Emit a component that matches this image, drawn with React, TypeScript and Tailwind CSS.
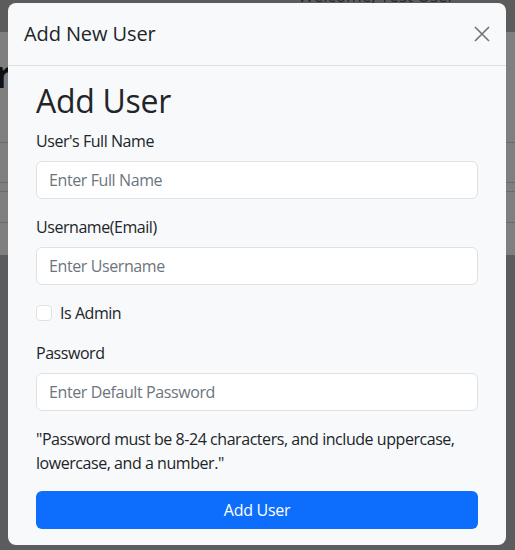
import { useState } from "react";

const font = { fontFamily: '"Segoe UI", "Open Sans", "Noto Sans", sans-serif' };

function Field({
  label,
  placeholder,
  type = "text",
}: {
  label: string;
  placeholder: string;
  type?: string;
}) {
  return (
    <div className="mb-4 flex flex-col">
      <label className="mb-2 text-[16px] leading-6 tracking-[-0.45px] text-[#212529]">{label}</label>
      <input
        type={type}
        placeholder={placeholder}
        className="h-[38px] w-full rounded-md border border-[#dee2e6] bg-white px-3 text-[16px] tracking-[-0.4px] text-[#212529] placeholder:text-[#6c757d] outline-none"
      />
    </div>
  );
}

export default function App() {
  const [isAdmin, setIsAdmin] = useState(false);

  return (
    <div className="relative h-[550px] w-[515px] overflow-hidden" style={font}>
      {/* dimmed page behind the modal */}
      <div className="flex h-full flex-col">
        <div className="h-[32px] bg-[#5c5c5c]" />
        <div className="flex h-[223px] flex-col bg-[#7f7f7f]">
          <div className="h-[110px]" />
          <div className="h-[40px] border-t border-[#6b6b6b]" />
          <div className="h-[9px] border-t border-[#6b6b6b]" />
          <div className="h-[31px] border-t border-[#6b6b6b]" />
          <div className="border-t border-[#6b6b6b]" />
        </div>
        <div className="flex-1 bg-[#5b5c5d]" />
      </div>
      <span className="absolute left-[298px] top-[-13px] text-[17px] leading-none text-[#2a2a2a]">
        Welcome, Test User
      </span>
      <span className="absolute left-[-5px] top-[54px] text-[38px] font-bold leading-none text-[#111111]">
        r
      </span>

      {/* modal */}
      <div className="absolute left-[8px] top-[3px] w-[498px] rounded-lg bg-[#f8f9fa]">
        <div className="flex items-center justify-between border-b border-[#dee2e6] p-4">
          <h5 className="text-[20px] font-medium leading-[30px] tracking-[-0.1px] text-[#212529]">Add New User</h5>
          <button className="flex h-4 w-4 items-center justify-center text-[#6c757d]">
            <svg viewBox="0 0 16 16" className="h-4 w-4" fill="none" stroke="currentColor" strokeWidth={1.6}>
              <path d="M1 1L15 15M15 1L1 15" />
            </svg>
          </button>
        </div>
        <div className="px-7 pb-4 pt-4">
          <h1 className="mb-[9px] text-[32px] font-medium leading-[38px] tracking-[-0.3px] text-[#212529]">Add User</h1>
          <Field label="User's Full Name" placeholder="Enter Full Name" />
          <Field label="Username(Email)" placeholder="Enter Username" />
          <label className="mb-4 flex h-6 items-center gap-2 text-[16px] tracking-[-0.45px] text-[#212529]">
            <input
              type="checkbox"
              checked={isAdmin}
              onChange={(e) => setIsAdmin(e.target.checked)}
              className="h-4 w-4 appearance-none rounded border border-[#dee2e6] bg-white"
            />
            Is Admin
          </label>
          <Field label="Password" placeholder="Enter Default Password" type="password" />
          <p className="mb-4 text-[16px] leading-6 tracking-[-0.45px] text-[#212529]">
            "Password must be 8-24 characters, and include uppercase, lowercase, and a number."
          </p>
          <button className="h-[38px] w-full rounded-md bg-[#0d6efd] text-[16px] tracking-[-0.3px] text-white">
            Add User
          </button>
        </div>
      </div>
    </div>
  );
}
